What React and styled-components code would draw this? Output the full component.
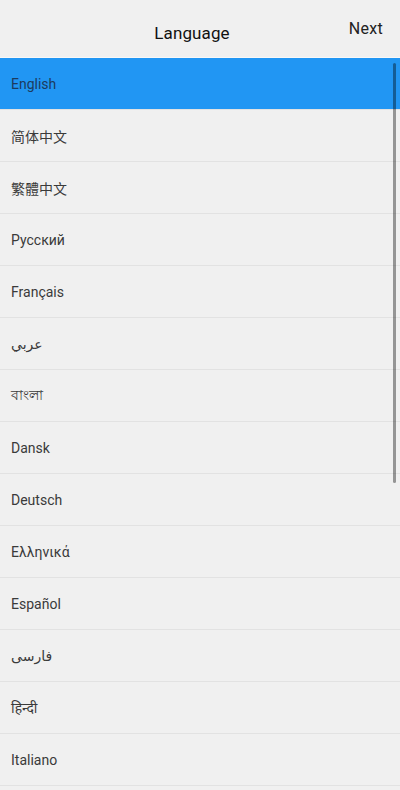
import React from "react";
import styled, { createGlobalStyle } from "styled-components";

const GlobalStyle = createGlobalStyle`
  html, body {
    margin: 0;
    padding: 0;
    height: 100%;
    overflow: hidden;
    background: #f0f0f0;
  }
  #root {
    height: 100%;
  }
`;

const Screen = styled.div`
  display: flex;
  flex-direction: column;
  height: 790px;
  width: 400px;
  background: #f0f0f0;
  font-family: Roboto, "Noto Sans", "Noto Sans CJK SC", "DejaVu Sans", sans-serif;
`;

const Header = styled.header`
  display: grid;
  grid-template-columns: 1fr auto 1fr;
  height: 57px;
  flex-shrink: 0;
  border-bottom: 1px solid #f8f8f8;
`;

const Title = styled.h1`
  grid-column: 2;
  margin: 0 16px 0 0;
  align-self: center;
  padding-top: 9px;
  font-size: 17px;
  font-weight: 400;
  color: #111;
  letter-spacing: 0.1px;
`;

const NextButton = styled.button`
  grid-column: 3;
  justify-self: end;
  align-self: start;
  margin: 19px 17px 0 0;
  padding: 0;
  border: none;
  background: none;
  font-family: inherit;
  font-size: 16px;
  color: #222;
  letter-spacing: 0.3px;
`;

const ListWrap = styled.div`
  position: relative;
  flex: 1;
  overflow: hidden;
`;

const List = styled.ul`
  list-style: none;
  margin: 0;
  padding: 0;
  height: 100%;
  overflow-y: auto;
  scrollbar-width: none;
  &::-webkit-scrollbar {
    display: none;
  }
`;

const Item = styled.li`
  display: flex;
  align-items: center;
  height: 51px;
  padding: 0 11px;
  border-bottom: 1px solid #e2e2e2;
  background: ${(p) => (p.$active ? "#2196f3" : "transparent")};
  font-size: 14px;
  color: ${(p) => (p.$active ? "#1d3b5e" : "#3a3a3a")};
`;

const Thumb = styled.div`
  position: absolute;
  top: 5px;
  right: 4px;
  width: 3px;
  height: 420px;
  border-radius: 2px;
  background: rgba(0, 0, 0, 0.38);
`;

const languages = [
  "English",
  "简体中文",
  "繁體中文",
  "Русский",
  "Français",
  "عربي",
  "বাংলা",
  "Dansk",
  "Deutsch",
  "Ελληνικά",
  "Español",
  "فارسی",
  "हिन्दी",
  "Italiano",
  "日本語",
  "한국어",
  "Nederlands",
  "Polski",
  "Português",
  "Română",
  "Svenska",
  "ไทย",
  "Türkçe",
  "Українська",
];

export default function App() {
  return (
    <>
      <GlobalStyle />
      <Screen>
        <Header>
          <Title>Language</Title>
          <NextButton>Next</NextButton>
        </Header>
        <ListWrap>
          <List>
            {languages.map((lang, i) => (
              <Item key={lang} $active={i === 0}>
                {lang}
              </Item>
            ))}
          </List>
          <Thumb />
        </ListWrap>
      </Screen>
    </>
  );
}
